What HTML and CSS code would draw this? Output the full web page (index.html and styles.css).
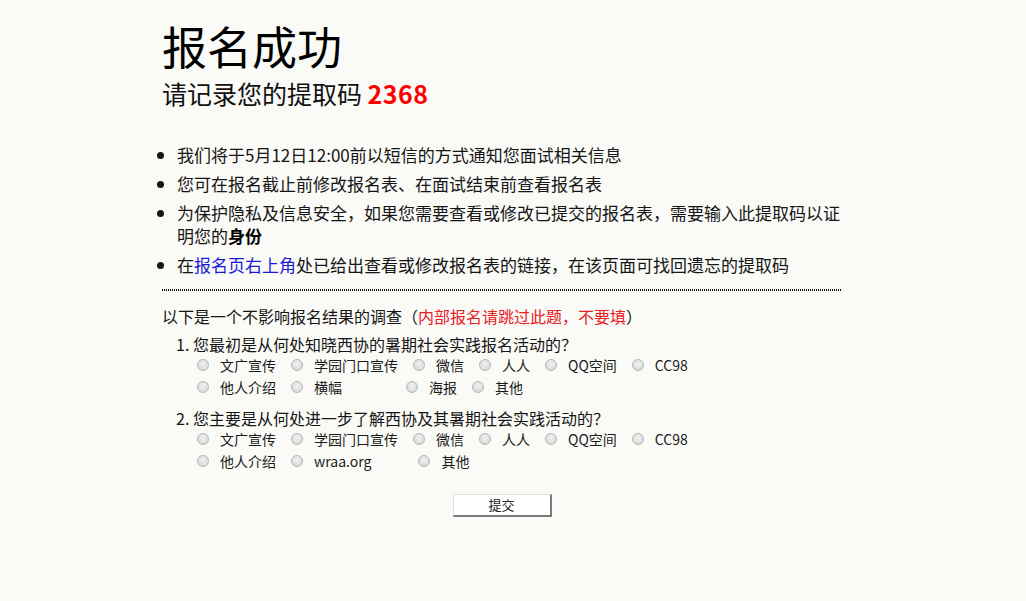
FILE: index.html
```html
<!DOCTYPE html>
<html lang="zh-CN">
<head>
<meta charset="utf-8">
<title>报名成功</title>
<link rel="stylesheet" href="styles.css">
</head>
<body>
<div class="page">
  <h1 class="title">报名成功</h1>
  <h2 class="subtitle">请记录您的提取码 <span class="code">2368</span></h2>
  <ul class="notes">
    <li>我们将于5月12日12:00前以短信的方式通知您面试相关信息</li>
    <li>您可在报名截止前修改报名表、在面试结束前查看报名表</li>
    <li><span>为保护隐私及信息安全，如果您需要查看或修改已提交的报名表，需要输入此提取码以证</span><span>明您的</span><b class="strong">身份</b></li>
    <li>在<a class="link" href="#">报名页右上角</a>处已给出查看或修改报名表的链接，在该页面可找回遗忘的提取码</li>
  </ul>
  <div class="divider"></div>
  <form class="survey">
    <p class="intro">以下是一个不影响报名结果的调查（<span class="warn">内部报名请跳过此题，不要填</span>）</p>
    <ol class="questions">
      <li>
        <p class="q">您最初是从何处知晓西协的暑期社会实践报名活动的？</p>
        <div class="row">
          <label class="opt"><input type="radio" name="q1"><span>文广宣传</span></label>
          <label class="opt"><input type="radio" name="q1"><span>学园门口宣传</span></label>
          <label class="opt"><input type="radio" name="q1"><span>微信</span></label>
          <label class="opt"><input type="radio" name="q1"><span>人人</span></label>
          <label class="opt"><input type="radio" name="q1"><span>QQ空间</span></label>
          <label class="opt"><input type="radio" name="q1"><span>CC98</span></label>
        </div>
        <div class="row">
          <label class="opt"><input type="radio" name="q1"><span>他人介绍</span></label>
          <label class="opt opt-wide1"><input type="radio" name="q1"><span>横幅</span></label>
          <label class="opt"><input type="radio" name="q1"><span>海报</span></label>
          <label class="opt"><input type="radio" name="q1"><span>其他</span></label>
        </div>
      </li>
      <li>
        <p class="q">您主要是从何处进一步了解西协及其暑期社会实践活动的？</p>
        <div class="row">
          <label class="opt"><input type="radio" name="q2"><span>文广宣传</span></label>
          <label class="opt"><input type="radio" name="q2"><span>学园门口宣传</span></label>
          <label class="opt"><input type="radio" name="q2"><span>微信</span></label>
          <label class="opt"><input type="radio" name="q2"><span>人人</span></label>
          <label class="opt"><input type="radio" name="q2"><span>QQ空间</span></label>
          <label class="opt"><input type="radio" name="q2"><span>CC98</span></label>
        </div>
        <div class="row">
          <label class="opt"><input type="radio" name="q2"><span>他人介绍</span></label>
          <label class="opt opt-wide2"><input type="radio" name="q2"><span>wraa.org</span></label>
          <label class="opt"><input type="radio" name="q2"><span>其他</span></label>
        </div>
      </li>
    </ol>
    <div class="actions">
      <button type="button" class="submit">提交</button>
    </div>
  </form>
</div>
</body>
</html>
```
FILE: styles.css
```css
html, body {
  margin: 0;
  padding: 0;
  background: #fafaf7;
}
body {
  font-family: "Noto Sans CJK SC", "Microsoft YaHei", sans-serif;
  color: #151515;
}
.page {
  width: 680px;
  margin-left: 162px;
  padding-top: 20px;
}
.title {
  margin: 0;
  font-size: 45px;
  line-height: 52px;
  font-weight: 400;
  color: #000;
}
.subtitle {
  margin: 6px 0 0;
  font-size: 25px;
  line-height: 30px;
  font-weight: 400;
  color: #111;
}
.code {
  color: #f00;
  font-weight: 700;
  letter-spacing: 0.5px;
}
.notes {
  margin: 35px 0 0;
  padding: 0 0 0 15px;
  font-size: 17px;
  line-height: 23px;
  list-style: disc;
}
.notes li {
  margin-bottom: 6px;
}
.notes li:last-child {
  margin-bottom: 0;
}
.strong {
  font-weight: 700;
  color: #000;
}
.link {
  color: #1a1ad6;
  text-decoration: none;
}
.divider {
  margin-top: 13px;
  height: 2px;
  background: repeating-linear-gradient(90deg, #111 0, #111 1px, transparent 1px, transparent 2px);
}
.survey {
  margin: 0;
  padding-top: 14px;
}
.intro {
  margin: 0;
  font-size: 16px;
  line-height: 22px;
}
.warn {
  color: #e8201f;
}
.questions {
  margin: 5px 0 0;
  padding-left: 31px;
  font-size: 16px;
}
.questions li {
  margin-bottom: 8px;
}
.questions li:last-child {
  margin-bottom: 0;
}
.q {
  margin: 0;
  line-height: 20px;
}
.row {
  display: flex;
  align-items: center;
  margin-left: 4px;
  height: 22px;
  font-size: 14px;
}
.opt {
  display: inline-flex;
  align-items: center;
  margin-right: 15px;
  color: #1a1a1a;
}
.opt-wide1 {
  margin-right: 64px;
}
.opt-wide2 {
  margin-right: 47px;
}
.opt input {
  appearance: none;
  -webkit-appearance: none;
  width: 12px;
  height: 12px;
  margin: 0 11px 0 0;
  border: 1px solid #b5b5b5;
  border-radius: 50%;
  background: radial-gradient(circle at 50% 40%, #f2f2f2 0%, #dcdcdc 70%, #cfcfcf 100%);
  box-sizing: border-box;
}
.actions {
  display: flex;
  justify-content: center;
  margin-top: 22px;
}
.submit {
  width: 99px;
  height: 23px;
  padding: 0;
  font-family: "Noto Sans CJK SC", sans-serif;
  font-size: 13px;
  line-height: 18px;
  color: #222;
  background: #fff;
  border-style: solid;
  border-width: 1px 2px 2px 1px;
  border-color: #e0e0e0 #7a7a7a #7a7a7a #e0e0e0;
}
```
